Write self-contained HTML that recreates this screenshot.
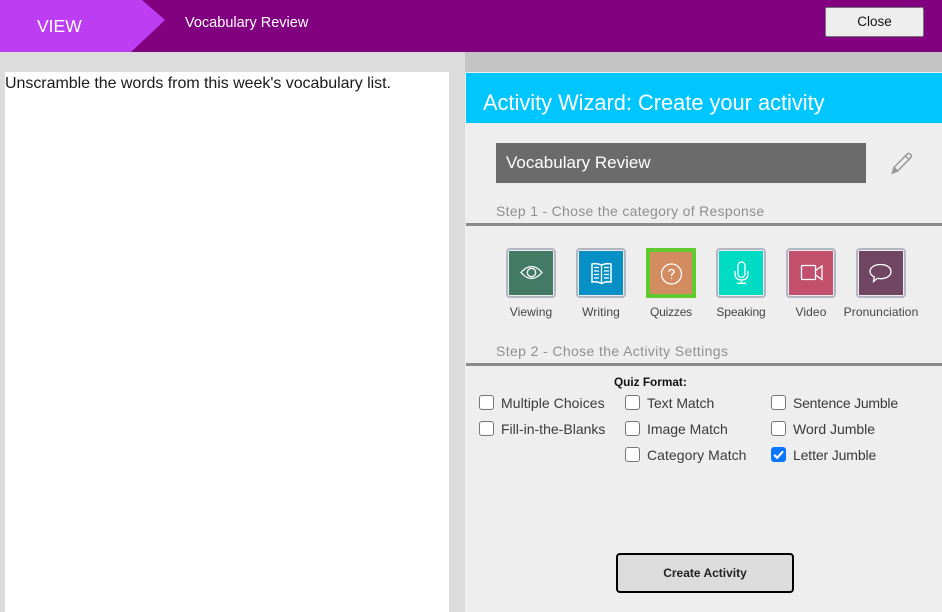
<!DOCTYPE html>
<html><head><meta charset="utf-8">
<style>
html,body{margin:0;padding:0}
body{width:942px;height:612px;position:relative;overflow:hidden;background:#dcdcdc;font-family:"Liberation Sans",sans-serif;color:#111}
.a{position:absolute;white-space:nowrap}
.ic{position:absolute;top:248px;width:46px;height:46px;border:2px solid #b3b7c4;border-radius:4px;background:#eee}
.ic i{position:absolute;left:1px;top:1px;width:44px;height:44px;display:block}
.ic svg{position:absolute;left:0;top:0;width:44px;height:44px;fill:none;stroke:#fff;stroke-width:1.3}
.lb{position:absolute;top:305px;width:90px;text-align:center;font-size:12px;color:#444;letter-spacing:.1px}
.cb{position:absolute;width:13px;height:13px;border:1.5px solid #767676;border-radius:3px;background:#fff}
.cl{position:absolute;font-size:14px;color:#3a3a3a;white-space:nowrap}
.hr{position:absolute;left:466px;width:476px;height:3px;background:#8a8a8a}
.st{position:absolute;left:496px;font-size:14px;color:#8f8f8f;white-space:nowrap;letter-spacing:.3px}
</style></head>
<body>
<div class="a" style="left:0;top:0;width:942px;height:52px;background:#800080"></div>
<svg class="a" style="left:0;top:0" width="170" height="52"><polygon points="0,0 142,0 165,20 131,52 0,52" fill="#bd3df2"/></svg>
<div class="a" style="left:37px;top:16px;font-size:17.5px;color:#fff">VIEW</div>
<div class="a" style="left:185px;top:15px;font-size:14.5px;color:#fff">Vocabulary Review</div>
<div class="a" style="left:825px;top:7px;width:97px;height:28px;border:1px solid #777;background:#eee;border-radius:2px;text-align:center;font-size:13.5px;line-height:27px;color:#111">Close</div>

<div class="a" style="left:5px;top:72px;width:444px;height:540px;background:#fff"></div>
<div class="a" style="left:5px;top:75px;font-size:16px;color:#1a1a1a;letter-spacing:-.04px">Unscramble the words from this week's vocabulary list.</div>

<div class="a" style="left:465px;top:52px;width:477px;height:560px;background:#eee"></div>
<div class="a" style="left:465px;top:52px;width:477px;height:20px;background:#c4c4c4"></div>
<div class="a" style="left:466px;top:73px;width:476px;height:50px;background:#00c6ff"></div>
<div class="a" style="left:483px;top:90px;font-size:21.8px;color:#fff">Activity Wizard: Create your activity</div>

<div class="a" style="left:496px;top:143px;width:370px;height:40px;background:#6b6b6b"></div>
<div class="a" style="left:506px;top:153px;font-size:17px;color:#fff">Vocabulary Review</div>
<svg class="a" style="left:888px;top:150px" width="26" height="26" fill="none" stroke="#999" stroke-width="1.5"><path d="M4.500 23 L6 17.500 L19 4.200 Q20.800 2.800 22.500 4.300 Q24 6 22.700 7.700 L9.500 21 Z"/><path d="M17.500 6 L21 9.500"/><path d="M4.500 23 L6 17.500 L9.500 21 Z" fill="#999"/></svg>

<div class="st" style="top:203px">Step 1 - Chose the category of Response</div>
<div class="hr" style="top:223px"></div>

<div class="ic" style="left:506px"><i style="background:#437a66"><svg viewBox="0 0 44 44"><path d="M12 21.500 Q22.500 9.500 33 21.500 Q22.500 33.500 12 21.500 Z"/><circle cx="22.500" cy="21.500" r="4.200"/></svg></i></div>
<div class="ic" style="left:576px"><i style="background:#0790c6"><svg viewBox="0 0 44 44"><path d="M22.500 14 Q18 12 13 13 V31 Q18 30 22.500 32.500 Q27 30 32 31 V13 Q27 12 22.500 14 Z" stroke-width="1.500"/><path d="M22.500 14 V32.500 M15 16.500 H20 M15 20 H20 M15 23.500 H20 M15 27 H20 M25 16.500 H30 M25 20 H30 M25 23.500 H30 M25 27 H30"/></svg></i></div>
<div class="a" style="left:646px;top:248px;width:42px;height:42px;border:4px solid #5fc92e;background:#d38c5f"><svg style="position:absolute;left:0;top:0" width="42" height="42" viewBox="0 0 42 42" fill="none" stroke="#fff" stroke-width="1.3"><circle cx="21.500" cy="22" r="10"/><path d="M19 19.800 Q19 17.500 21.500 17.500 Q24 17.500 24 19.600 Q24 21 22.300 21.900 Q21.500 22.400 21.500 24"/><path d="M21.500 25.500 V26.800"/></svg></div>
<div class="ic" style="left:716px"><i style="background:#00dcc3"><svg viewBox="0 0 44 44"><rect x="19" y="11" width="7" height="15.500" rx="3.500"/><path d="M16 20 V22.500 Q16 29 22.500 29 Q29 29 29 22.500 V20 M22.500 29 V32 M18 32.300 H27"/></svg></i></div>
<div class="ic" style="left:786px"><i style="background:#c2506c"><svg viewBox="0 0 44 44"><rect x="12.500" y="14.500" width="14" height="14" rx="1"/><path d="M26.500 19.500 L33 15 V28.500 L26.500 24"/></svg></i></div>
<div class="ic" style="left:856px"><i style="background:#714663"><svg viewBox="0 0 44 44"><path d="M21.500 13.500 C27.500 13.500 32 16.500 32 20.500 C32 24.800 27.500 27.700 21.500 27.700 Q20 27.700 18.500 27.300 L14.500 30.500 L15.300 26 C12.700 24.600 11 22.700 11 20.500 C11 16.500 15.500 13.500 21.500 13.500 Z"/></svg></i></div>

<div class="lb" style="left:486px">Viewing</div>
<div class="lb" style="left:556px">Writing</div>
<div class="lb" style="left:626px;letter-spacing:-.2px">Quizzes</div>
<div class="lb" style="left:696px;letter-spacing:-.1px">Speaking</div>
<div class="lb" style="left:766px">Video</div>
<div class="lb" style="left:836px">Pronunciation</div>

<div class="st" style="top:343px;letter-spacing:.38px">Step 2 - Chose the Activity Settings</div>
<div class="hr" style="top:363px"></div>

<div class="a" style="left:614px;top:375px;font-size:11.8px;font-weight:bold;color:#111">Quiz Format:</div>

<div class="cb" style="left:479px;top:395px"></div><div class="cl" style="left:501px;top:395px;letter-spacing:.06px">Multiple Choices</div>
<div class="cb" style="left:479px;top:421px"></div><div class="cl" style="left:501px;top:421px;letter-spacing:.01px">Fill-in-the-Blanks</div>
<div class="cb" style="left:625px;top:395px"></div><div class="cl" style="left:647px;top:395px;letter-spacing:-.05px">Text Match</div>
<div class="cb" style="left:625px;top:421px"></div><div class="cl" style="left:647px;top:421px;letter-spacing:-.02px">Image Match</div>
<div class="cb" style="left:625px;top:447px"></div><div class="cl" style="left:647px;top:447px;letter-spacing:.05px">Category Match</div>
<div class="cb" style="left:771px;top:395px"></div><div class="cl" style="left:793px;top:395px;letter-spacing:-.22px">Sentence Jumble</div>
<div class="cb" style="left:771px;top:421px"></div><div class="cl" style="left:793px;top:421px;letter-spacing:-.02px">Word Jumble</div>
<div class="cb" style="left:771px;top:447px;background:#0a75ff;border-color:#0a75ff"><svg style="position:absolute;left:0;top:0" width="13" height="13" fill="none" stroke="#fff" stroke-width="2.200"><path d="M2.200 6.800 L5.200 9.800 L11 3.300"/></svg></div>
<div class="cl" style="left:793px;top:447px;letter-spacing:-.13px">Letter Jumble</div>

<div class="a" style="left:616px;top:553px;width:174px;height:36px;border:2px solid #000;border-radius:4px;background:#dcdcdc;text-align:center;font-size:12px;font-weight:bold;line-height:36px;color:#222">Create Activity</div>
</body></html>
